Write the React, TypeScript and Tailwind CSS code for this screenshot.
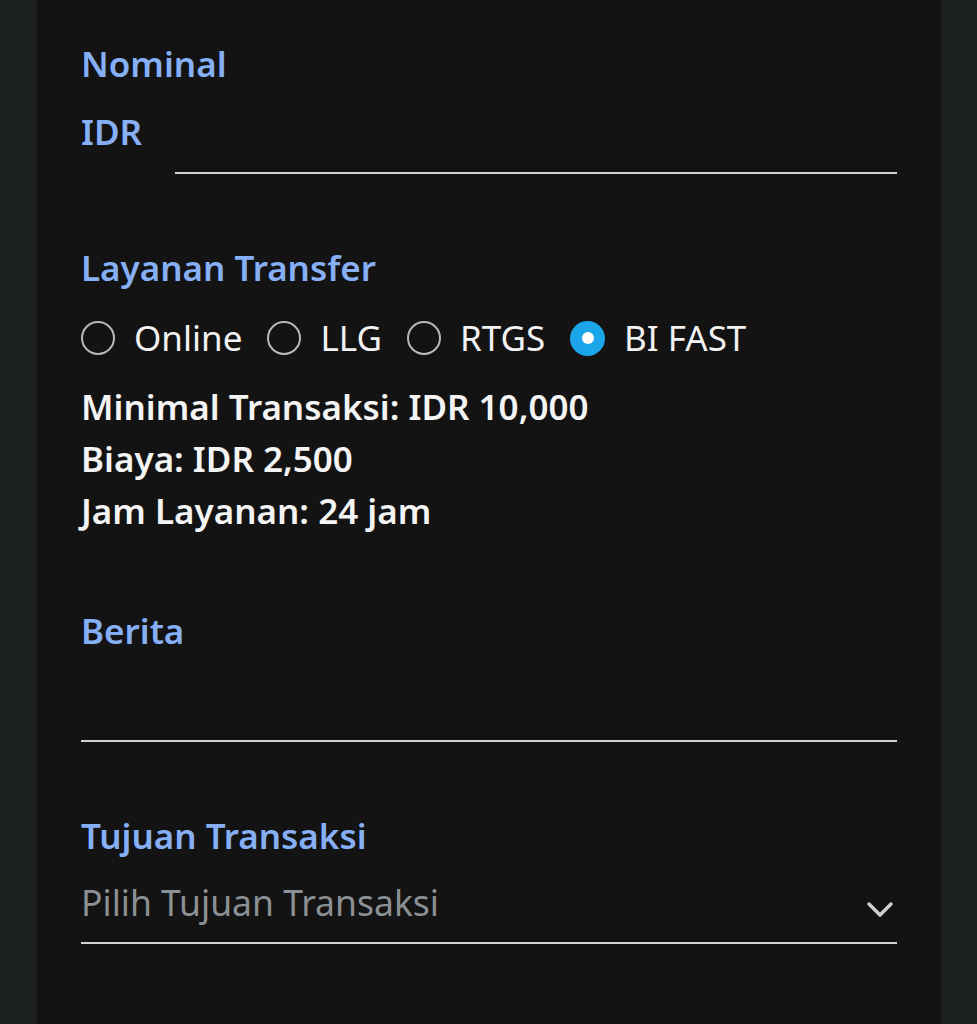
import { useState } from 'react';

const options = ['Online', 'LLG', 'RTGS', 'BI FAST'];

function Radio({ label, checked, onClick }: { label: string; checked: boolean; onClick: () => void }) {
  return (
    <button type="button" onClick={onClick} className="flex items-center gap-[19px]">
      {checked ? (
        <span className="flex h-[35px] w-[35px] items-center justify-center rounded-full bg-[#1ca6ea]">
          <span className="h-[12px] w-[12px] rounded-full bg-white" />
        </span>
      ) : (
        <span className="h-[34px] w-[34px] rounded-full border-2 border-[#b9b9b9]" />
      )}
      <span className="text-[35px] leading-[44px] text-[#f2f2f2]">{label}</span>
    </button>
  );
}

export default function App() {
  const [service, setService] = useState('BI FAST');

  return (
    <div className="flex min-h-[1024px] bg-[#1b1f1f] font-['Noto_Sans',sans-serif]">
      <div className="ml-[37px] w-[904px] bg-[#131313] px-[44px] pt-[42px] pb-[60px]">
        {/* Nominal */}
        <div className="text-[35px] font-semibold leading-[44px] text-[#86aff5]">Nominal</div>
        <div className="mt-[24px] flex h-[64px]">
          <span className="text-[35px] font-semibold leading-[44px] text-[#86aff5]">IDR</span>
          <div className="ml-[33px] flex-1 self-end border-b-2 border-[#d2d2d2]" />
        </div>

        {/* Layanan Transfer */}
        <div className="mt-[72px] text-[35px] font-semibold leading-[44px] text-[#86aff5]">Layanan Transfer</div>
        <div className="mt-[26px] flex items-center gap-[25px]">
          {options.map((o) => (
            <Radio key={o} label={o} checked={service === o} onClick={() => setService(o)} />
          ))}
        </div>
        <div className="mt-[21px] text-[35px] font-semibold leading-[52px] text-[#f4f4f4]">
          <div>Minimal Transaksi: IDR 10,000</div>
          <div>Biaya: IDR 2,500</div>
          <div>Jam Layanan: 24 jam</div>
        </div>

        {/* Berita */}
        <div className="mt-[72px] text-[35px] font-semibold leading-[44px] text-[#86aff5]">Berita</div>
        <div className="h-[89px] border-b-2 border-[#d2d2d2]" />

        {/* Tujuan Transaksi */}
        <div className="mt-[72px] text-[35px] font-semibold leading-[44px] text-[#86aff5]">Tujuan Transaksi</div>
        <div className="mt-[22px] flex h-[64px] items-start justify-between border-b-2 border-[#d2d2d2]">
          <span className="text-[35.5px] leading-[44px] text-[#8b9094]">Pilih Tujuan Transaksi</span>
          <svg width="28" height="20" viewBox="0 0 28 20" className="mt-[20px] mr-[3px]">
            <polyline points="3,4 14,15 25,4" fill="none" stroke="#cfcfcf" strokeWidth="3.5" strokeLinecap="round" strokeLinejoin="round" />
          </svg>
        </div>
      </div>
    </div>
  );
}
